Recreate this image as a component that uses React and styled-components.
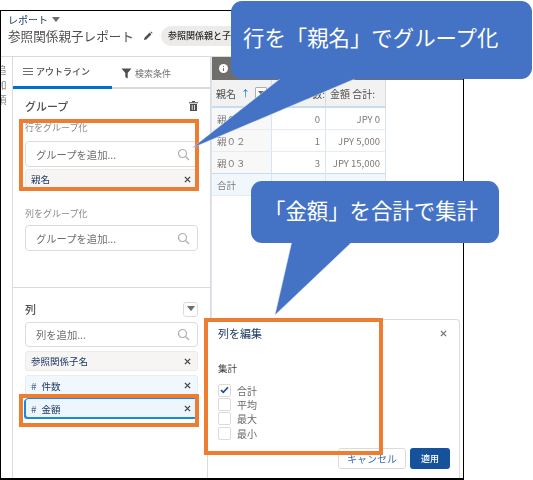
import React from "react";
import styled, { createGlobalStyle } from "styled-components";

const Global = createGlobalStyle`
  html, body { margin: 0; padding: 0; background: #fff; }
  body { font-family: "Noto Sans CJK JP", "Liberation Sans", sans-serif; color: #3e3e3c; }
  * { box-sizing: border-box; }
`;
const Page = styled.div`position: relative; width: 533px; height: 480px; overflow: hidden; background: #fff;`;
const Frame = styled.div`
  margin-top: 10px; width: 464px; height: 470px; border: 1px solid #000; border-bottom-width: 2px;
  display: flex; flex-direction: column; overflow: hidden; background: #fff;
`;
const Soft = styled.div`filter: blur(.35px);`;
const Header = styled.header`
  height: 46px; flex: none; padding: 2px 0 0 7px; border-bottom: 1px solid #dddbda; background: #fff;
`;
const Crumb = styled.div`font-size: 10px; line-height: 13px; color: #16325c; display: flex; align-items: center; gap: 4px;`;
const Title = styled.div`display: flex; align-items: center; gap: 9px; margin-top: 0; white-space: nowrap;`;
const TitleText = styled.span`font-size: 12.6px; line-height: 20px; color: #514f4d;`;
const Chip = styled.span`
  margin-left: -1px; height: 20px; padding: 0 8px 0 7px; border-radius: 10px; background: #ecebea;
  font-size: 9px; font-weight: 500; line-height: 20px; color: #2b2826;
`;
const Body = styled.div`flex: 1; min-height: 0; display: flex;`;
const Rail = styled.div`
  width: 12px; flex: none; border-right: 1px solid #dddbda; overflow: hidden; padding-top: 8px;
`;
const RailText = styled.div`
  writing-mode: vertical-rl; font-size: 10px; line-height: 10px; letter-spacing: 5px; color: #8a8886; margin-left: -5px;
`;
const Sidebar = styled.aside`width: 198px; flex: none; border-right: 1px solid #dddbda; display: flex; flex-direction: column;`;
const Tabs = styled.div`height: 32px; flex: none; display: flex; border-bottom: 2px solid #dddbda; position: relative;`;
const Tab = styled.div`
  width: ${p => p.$w}px; height: 32px; display: flex; align-items: center; gap: 3px; padding-left: ${p => p.$pad}px;
  font-size: 9px; font-weight: ${p => p.$active ? 500 : 400}; color: ${p => p.$active ? "#514f4d" : "#706e6b"};
  border-bottom: ${p => p.$active ? "3px solid #0070d2" : "none"};
`;
const GroupSection = styled.section`height: 199px; flex: none; padding: 9px 12px 0; border-bottom: 1px solid #dddbda;`;
const ColumnSection = styled.section`flex: 1; padding: 13px 12px 0;`;
const SectionHead = styled.div`display: flex; justify-content: space-between; align-items: center; height: ${p => p.$h}px;`;
const SectionTitle = styled.h3`margin: 0; font-size: 11px; font-weight: 500; color: #514f4d; line-height: 16px;`;
const FieldLabel = styled.div`font-size: 9px; line-height: 12px; color: #8a8886; margin-top: ${p => p.$top}px;`;
const SearchBox = styled.div`
  height: ${p => p.$h || 26}px; margin-top: ${p => p.$top}px; border: 1px solid #dddbda; border-radius: 4px; background: #fff;
  display: flex; align-items: center; justify-content: space-between; padding: 0 7px 0 10px;
  font-size: 10.3px; color: #706e6b;
`;
const Pill = styled.div`
  height: ${p => p.$h || 20}px; margin-top: ${p => p.$top}px; border-radius: 3px; padding: 0 6px 0 5px;
  display: flex; align-items: center; justify-content: space-between; font-size: 9.5px; color: #16325c;
  background: ${p => p.$selected ? "#eef6fd" : p.$blue ? "#f0f7fd" : "#f6f5f4"};
  border: 1px solid ${p => p.$selected ? "#1589ee" : "#ecebea"};
  ${p => p.$selected ? "box-shadow: -1px 1px 0 #1589ee;" : ""}
`;
const Hash = styled.span`color: #54698d; margin-right: 5px; font-size: 10px;`;
const MenuButton = styled.div`
  width: 15px; height: 15px; border: 1px solid #dddbda; border-radius: 3px; background: #fff;
  display: flex; align-items: center; justify-content: center;
`;
const Main = styled.main`flex: 1; min-width: 0; display: flex; flex-direction: column; border-left: 1px solid #d8e6f3;`;
const InfoBar = styled.div`height: 23px; flex: none; background: #706e6b; display: flex; align-items: center; padding-left: 7px;`;
const Table = styled.div`
  display: grid; grid-template-columns: 60px 54px 60px; grid-template-rows: 28px repeat(4, 22px); width: 174px;
`;
const Head = styled.div`
  background: #f3f2f2; border-right: 1px solid #dddbda; border-bottom: 2px solid #c9dcec; white-space: nowrap;
  display: flex; align-items: center; padding: 0 0 0 4px; gap: 5px; font-size: 10px; font-weight: 400;
  color: #514f4d; justify-content: ${p => p.$end ? "flex-end" : "flex-start"};
`;
const SortArrow = styled.span`color: #0070d2; font-size: 9px; flex: none;`;
const HeadMenu = styled.span`
  width: 12px; height: 12px; border: 1px solid #b0adab; border-radius: 1px; background: #fff; flex: none;
  display: flex; align-items: center; justify-content: center;
`;
const Cell = styled.div`
  display: flex; align-items: center; padding: 0 5px; justify-content: ${p => p.$num ? "flex-end" : "flex-start"};
  background: ${p => p.$total ? "#f0f7fd" : p.$label ? "#f8f8f8" : "#fff"};
  border-right: 1px solid #d8e6f3; border-bottom: 1px solid ${p => p.$last ? "#c9dcec" : "#e4edf5"};
  font-size: 9.5px; color: #7b7977; white-space: nowrap;
`;
const Popover = styled.div`
  position: absolute; left: 207px; top: 319px; width: 253px; height: 159px; background: #fff;
  border: 1px solid #dddbda; border-bottom: 0; border-radius: 4px 4px 0 0; padding: 5px 12px 7px 10px;
  filter: blur(.35px);
`;
const PopHead = styled.div`display: flex; justify-content: space-between; align-items: center; height: 16px;`;
const PopTitle = styled.div`font-size: 11px; color: #16325c;`;
const PopLabel = styled.div`font-size: 9.5px; color: #3e3e3c; margin-top: 20px; line-height: 14px;`;
const CheckList = styled.div`display: flex; flex-direction: column; margin-top: 8px;`;
const CheckRow = styled.label`display: flex; align-items: center; gap: 6px; height: 14.3px; font-size: 10px; color: #6b6967;`;
const Box = styled.span`
  width: 13px; height: 13px; border: 1px solid #dddbda; border-radius: 2px; background: #fff;
  display: flex; align-items: center; justify-content: center;
`;
const PopFoot = styled.div`position: absolute; right: 9px; top: 128px; display: flex; gap: 4px;`;
const Ghost = styled.button`
  width: 68px; height: 21px; padding: 0; border: 1px solid #dddbda; border-radius: 3px; background: #fff;
  font: 400 10px "Noto Sans CJK JP", sans-serif; color: #3d6fa8;
`;
const Primary = styled.button`
  width: 40px; height: 21px; padding: 0; border: 0; border-radius: 3px; background: #16529b;
  font: 500 9px "Noto Sans CJK JP", sans-serif; color: #fff;
`;
const Tail = styled.svg`position: absolute; left: 0; top: 0; width: 533px; height: 480px; pointer-events: none;`;
const Callout = styled.div`
  position: absolute; left: ${p => p.$x}px; top: ${p => p.$y}px; width: ${p => p.$w}px; height: ${p => p.$h}px;
  background: #4472c4; border-radius: 11px; color: #fff; font-size: ${p => p.$size}px; line-height: 1;
  padding-left: ${p => p.$pl}px; padding-top: ${p => p.$pt}px; white-space: nowrap;
`;
const Mark = styled.div`
  position: absolute; left: ${p => p.$x}px; top: ${p => p.$y}px; width: ${p => p.$w}px; height: ${p => p.$h}px;
  border: 4px solid #ed7d31;
`;

const Search = () => (
  <svg width="13" height="13" viewBox="0 0 13 13" fill="none" stroke="#b0adab" strokeWidth="1.2"><circle cx="5.5" cy="5.5" r="4" /><path d="M8.5 8.5l3.5 3.5" /></svg>
);
const Close = ({ c = "#3e3e3c" }) => (
  <svg width="7" height="7" viewBox="0 0 8 8" stroke={c} strokeWidth="1.4"><path d="M1 1l6 6M7 1L1 7" /></svg>
);
const Caret = ({ c = "#706e6b", w = 8 }) => (
  <svg width={w} height={w * .65} viewBox="0 0 8 5.2" fill={c}><path d="M0 0h8L4 5.2z" /></svg>
);
const Pencil = () => (
  <svg width="10" height="10" viewBox="0 0 10 10" fill="#514f4d"><path d="M1 9l.5-2.3L6.6 1.6l1.8 1.8-5.1 5.1zM7.2 1l.7-.6 1.7 1.7-.6.7z" /></svg>
);
const ListIcon = () => (
  <svg width="10" height="9" viewBox="0 0 10 9" stroke="#706e6b" strokeWidth="1"><path d="M0 1.5h10M0 4.5h10M0 7.5h10" /></svg>
);
const Funnel = () => (
  <svg width="11" height="11" viewBox="0 0 11 11" fill="#514f4d"><path d="M.5 .5h10L6.7 5v5.5L4.3 9V5z" /></svg>
);
const Trash = () => (
  <svg width="9" height="10" viewBox="0 0 9 10" fill="#514f4d"><path d="M0 1.2h9v1H0zM3 0h3v1H3zM1 3h7v7H1zM2.8 4v5h.8V4zM5.2 4v5H6V4z" fillRule="evenodd" /></svg>
);
const Info = () => (
  <svg width="9" height="9" viewBox="0 0 9 9"><circle cx="4.5" cy="4.5" r="4.5" fill="#fff" /><path d="M4 4h1v3H4zM4 2h1v1H4z" fill="#706e6b" /></svg>
);
const Check = () => (
  <svg width="9" height="8" viewBox="0 0 9 8" fill="none" stroke="#16529b" strokeWidth="1.7"><path d="M1 4.2l2.3 2.2L8 1.2" /></svg>
);

const rows = [
  ["親０１", "0", "JPY 0"],
  ["親０２", "1", "JPY 5,000"],
  ["親０３", "3", "JPY 15,000"],
];

export default function App() {
  return (
    <Page>
      <Global />
      <Soft>
        <Frame>
          <Header>
            <Crumb>レポート <Caret /></Crumb>
            <Title>
              <TitleText>参照関係親子レポート</TitleText>
              <Pencil />
              <Chip>参照関係親と子レポート</Chip>
            </Title>
          </Header>
          <Body>
            <Rail><RailText>追加項</RailText></Rail>
            <Sidebar>
              <Tabs>
                <Tab $w={99} $pad={10} $active><ListIcon /> アウトライン</Tab>
                <Tab $w={98} $pad={9}><Funnel /> 検索条件</Tab>
              </Tabs>
              <GroupSection>
                <SectionHead $h={16}><SectionTitle>グループ</SectionTitle><Trash /></SectionHead>
                <FieldLabel $top={8}>行をグループ化</FieldLabel>
                <SearchBox $top={7}>グループを追加... <Search /></SearchBox>
                <Pill $top={2} $h={20}>親名 <Close /></Pill>
                <FieldLabel $top={19}>列をグループ化</FieldLabel>
                <SearchBox $top={5}>グループを追加... <Search /></SearchBox>
              </GroupSection>
              <ColumnSection>
                <SectionHead $h={16}><SectionTitle>列</SectionTitle><MenuButton><Caret /></MenuButton></SectionHead>
                <SearchBox $top={5} $h={25}>列を追加... <Search /></SearchBox>
                <Pill $top={4}>参照関係子名 <Close /></Pill>
                <Pill $top={4} $blue><span><Hash>#</Hash>件数</span> <Close /></Pill>
                <Pill $top={3} $selected><span><Hash>#</Hash>金額</span> <Close /></Pill>
              </ColumnSection>
            </Sidebar>
            <Main>
              <InfoBar><Info /></InfoBar>
              <Table>
                <Head>親名 <SortArrow>↑</SortArrow><HeadMenu><Caret w={6} /></HeadMenu></Head>
                <Head $end>件数:</Head>
                <Head>金額 合計:</Head>
                {rows.map(r => (
                  <React.Fragment key={r[0]}>
                    <Cell $label $last={r[0] === "親０３"}>{r[0]}</Cell>
                    <Cell $num $last={r[0] === "親０３"}>{r[1]}</Cell>
                    <Cell $num $last={r[0] === "親０３"}>{r[2]}</Cell>
                  </React.Fragment>
                ))}
                <Cell $total>合計</Cell><Cell $total /><Cell $total />
              </Table>
            </Main>
          </Body>
        </Frame>
      </Soft>
      <Popover>
        <PopHead><PopTitle>列を編集</PopTitle><Close c="#706e6b" /></PopHead>
        <PopLabel>集計</PopLabel>
        <CheckList>
          <CheckRow><Box><Check /></Box>合計</CheckRow>
          <CheckRow><Box />平均</CheckRow>
          <CheckRow><Box />最大</CheckRow>
          <CheckRow><Box />最小</CheckRow>
        </CheckList>
        <PopFoot><Ghost>キャンセル</Ghost><Primary>適用</Primary></PopFoot>
      </Popover>
      <Mark $x={19} $y={119} $w={180} $h={72} />
      <Mark $x={19} $y={394} $w={180} $h={33} />
      <Mark $x={204} $y={318} $w={179} $h={137} />
      <Tail viewBox="0 0 533 480">
        <path d="M281 78L192 148L357 78z" fill="#4472c4" stroke="#dfe6f4" strokeWidth=".5" />
        <path d="M292 241L275 315L353 241z" fill="#4472c4" stroke="#dfe6f4" strokeWidth=".5" />
      </Tail>
      <Callout $x={231} $y={1} $w={301} $h={78} $size={21.4} $pl={12} $pt={25}>行を「親名」でグループ化</Callout>
      <Callout $x={251} $y={181} $w={248} $h={62} $size={21.4} $pl={13} $pt={18}>「金額」を合計で集計</Callout>
    </Page>
  );
}
